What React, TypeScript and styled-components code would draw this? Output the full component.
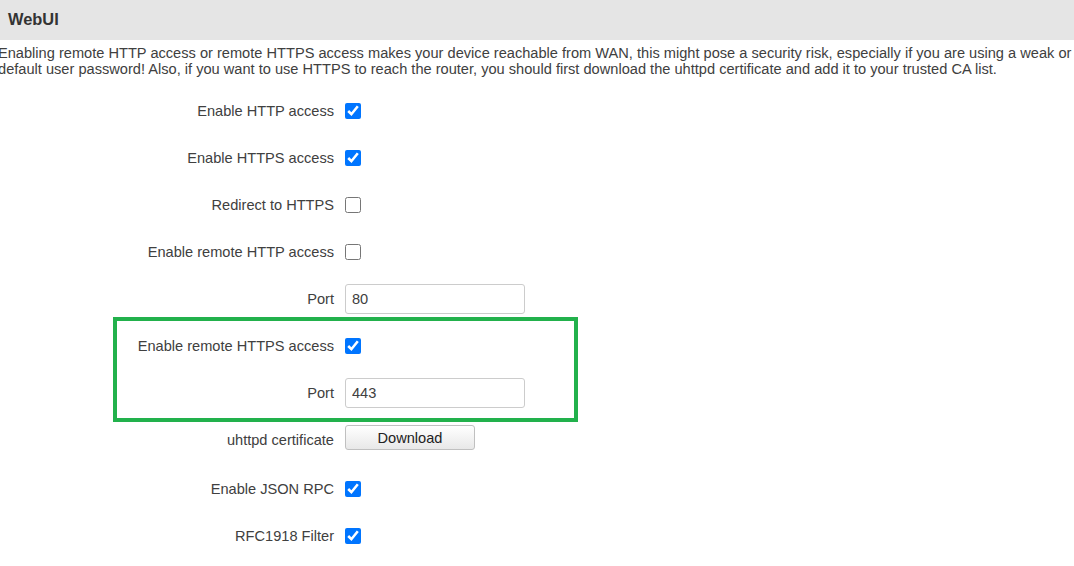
import styled, { createGlobalStyle } from 'styled-components';

const GlobalStyle = createGlobalStyle`
  html, body {
    margin: 0;
    padding: 0;
    background: #fff;
  }
  body {
    font-family: "Liberation Sans", Arial, sans-serif;
    color: #404040;
    overflow: hidden;
  }
`;

type Field =
  | { kind: 'check'; label: string; checked: boolean }
  | { kind: 'text'; label: string; value: string }
  | { kind: 'button'; label: string; text: string };

const before: Field[] = [
  { kind: 'check', label: 'Enable HTTP access', checked: true },
  { kind: 'check', label: 'Enable HTTPS access', checked: true },
  { kind: 'check', label: 'Redirect to HTTPS', checked: false },
  { kind: 'check', label: 'Enable remote HTTP access', checked: false },
  { kind: 'text', label: 'Port', value: '80' },
];

const highlighted: Field[] = [
  { kind: 'check', label: 'Enable remote HTTPS access', checked: true },
  { kind: 'text', label: 'Port', value: '443' },
];

const after: Field[] = [
  { kind: 'button', label: 'uhttpd certificate', text: 'Download' },
  { kind: 'check', label: 'Enable JSON RPC', checked: true },
  { kind: 'check', label: 'RFC1918 Filter', checked: true },
];

const FieldRow = ({ field }: { field: Field }) => (
  <S.Row $extra={field.kind === 'button' ? 2 : 0}>
    <S.Label>{field.label}</S.Label>
    <S.Control>
      {field.kind === 'check' && <S.Check type="checkbox" defaultChecked={field.checked} />}
      {field.kind === 'text' && <S.TextInput type="text" defaultValue={field.value} />}
      {field.kind === 'button' && <S.Button type="button">{field.text}</S.Button>}
    </S.Control>
  </S.Row>
);

const App = () => {
  return (
    <>
      <GlobalStyle />
      <S.Page>
        <S.SectionHeader>WebUI</S.SectionHeader>
        <S.Description>
          Enabling remote HTTP access or remote HTTPS access makes your device reachable from WAN, this
          might pose a security risk, especially if you are using a weak or default user password! Also, if
          you want to use HTTPS to reach the router, you should first download the uhttpd certificate and
          add it to your trusted CA list.
        </S.Description>
        <S.Form>
          {before.map((f, i) => (
            <FieldRow key={'b' + i} field={f} />
          ))}
          <S.Group>
            <S.Frame />
            {highlighted.map((f, i) => (
              <FieldRow key={'h' + i} field={f} />
            ))}
          </S.Group>
          {after.map((f, i) => (
            <FieldRow key={'a' + i} field={f} />
          ))}
        </S.Form>
      </S.Page>
    </>
  );
};
export default App;

const S = {
  Page: styled.div`
    width: 1074px;
    height: 566px;
    display: flex;
    flex-direction: column;
  `,
  SectionHeader: styled.div`
    height: 40px;
    box-sizing: border-box;
    background: #e5e5e5;
    padding: 10px 0 0 8px;
    font-size: 16.4px;
    font-weight: 700;
    color: #333;
  `,
  Description: styled.p`
    margin: 5px 0 0 -2px;
    width: 1080px;
    font-size: 14.62px;
    line-height: 16px;
    color: #404040;
  `,
  Form: styled.div`
    margin-top: 10.5px;
    display: flex;
    flex-direction: column;
  `,
  Group: styled.div`
    position: relative;
    display: flex;
    flex-direction: column;
  `,
  Frame: styled.div`
    position: absolute;
    left: 113px;
    top: -5.5px;
    width: 465px;
    height: 105px;
    box-sizing: border-box;
    border: 4.5px solid #22b14c;
    pointer-events: none;
  `,
  Row: styled.div<{ $extra: number }>`
    height: 47px;
    padding-bottom: ${(p) => p.$extra}px;
    display: grid;
    grid-template-columns: 334px 1fr;
    column-gap: 11px;
    align-items: center;
  `,
  Label: styled.div`
    text-align: right;
    font-size: 14.6px;
    color: #404040;
  `,
  Control: styled.div`
    display: flex;
    align-items: center;
  `,
  Check: styled.input`
    width: 16px;
    height: 16px;
    margin: 0;
    accent-color: #0075ff;
  `,
  TextInput: styled.input`
    width: 180px;
    height: 30px;
    box-sizing: border-box;
    border: 1px solid #ccc;
    border-radius: 3px;
    padding: 0 6px;
    font-family: "Liberation Sans", Arial, sans-serif;
    font-size: 14.6px;
    color: #404040;
    outline: none;
  `,
  Button: styled.button`
    width: 130px;
    height: 25px;
    margin-top: -5px;
    box-sizing: border-box;
    border: 1px solid #c0c0c0;
    border-radius: 3px;
    background: linear-gradient(#ffffff, #e8e8e8);
    font-family: "Liberation Sans", Arial, sans-serif;
    font-size: 14.6px;
    color: #222;
    padding: 0;
  `,
};
